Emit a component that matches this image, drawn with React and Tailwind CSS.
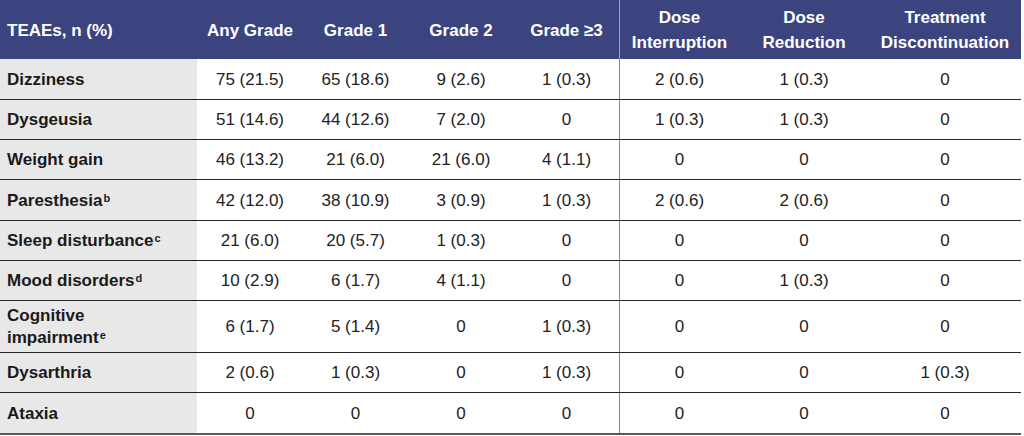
import React from 'react';

const cols = 'grid grid-cols-[197px_106px_105px_106px_105px_120px_130px_152px]';

const headers = [
    ['Any Grade'],
    ['Grade 1'],
    ['Grade 2'],
    ['Grade ≥3'],
    ['Dose', 'Interruption'],
    ['Dose', 'Reduction'],
    ['Treatment', 'Discontinuation'],
];

const rows = [
    { label: 'Dizziness', h: 'h-[41px]', cells: ['75 (21.5)', '65 (18.6)', '9 (2.6)', '1 (0.3)', '2 (0.6)', '1 (0.3)', '0'] },
    { label: 'Dysgeusia', h: 'h-[40px]', cells: ['51 (14.6)', '44 (12.6)', '7 (2.0)', '0', '1 (0.3)', '1 (0.3)', '0'] },
    { label: 'Weight gain', h: 'h-[40px]', cells: ['46 (13.2)', '21 (6.0)', '21 (6.0)', '4 (1.1)', '0', '0', '0'] },
    { label: 'Paresthesia', sup: 'b', h: 'h-[41px]', cells: ['42 (12.0)', '38 (10.9)', '3 (0.9)', '1 (0.3)', '2 (0.6)', '2 (0.6)', '0'] },
    { label: 'Sleep disturbance', sup: 'c', h: 'h-[40px]', cells: ['21 (6.0)', '20 (5.7)', '1 (0.3)', '0', '0', '0', '0'] },
    { label: 'Mood disorders', sup: 'd', h: 'h-[40px]', cells: ['10 (2.9)', '6 (1.7)', '4 (1.1)', '0', '0', '1 (0.3)', '0'] },
    { label: 'Cognitive', label2: 'impairment', sup: 'e', h: 'h-[52px]', cells: ['6 (1.7)', '5 (1.4)', '0', '1 (0.3)', '0', '0', '0'] },
    { label: 'Dysarthria', h: 'h-[40px]', cells: ['2 (0.6)', '1 (0.3)', '0', '1 (0.3)', '0', '0', '1 (0.3)'] },
    { label: 'Ataxia', h: 'h-[42px]', last: true, cells: ['0', '0', '0', '0', '0', '0', '0'] },
];

const Sup = ({ children }) => (
    <sup className="text-[11px] font-bold relative top-[-4px] ml-[1px]">{children}</sup>
);

const App = () => {
    return (
        <div className="w-[1024px] h-[436px] bg-white font-['Liberation_Sans',Arial,sans-serif] text-[17px]">
            <div className="w-[1021px]">
                {/* header */}
                <div className={`${cols} h-[59px] bg-[#3c4480] text-white font-bold`}>
                    <div className="flex items-center pl-[7px] pt-[2px]">TEAEs, n (%)</div>
                    {headers.map((h, i) => (
                        <div
                            key={i}
                            className={`flex flex-col items-center justify-center text-center leading-[25px] ${h.length === 1 ? 'pt-[2px]' : ''} ${i === 4 ? 'border-l-[1.5px] border-[#9ea3d2]' : ''}`}
                        >
                            {h.map((line) => (
                                <span key={line}>{line}</span>
                            ))}
                        </div>
                    ))}
                </div>

                {/* body */}
                {rows.map((r) => (
                    <div
                        key={r.label}
                        className={`${cols} ${r.h} ${r.last ? 'border-b-2 border-[#5a5a5a]' : 'border-b-[1.5px] border-[#262626]'}`}
                    >
                        <div className="bg-[#e8e8e8] flex flex-col justify-center pl-[7px] pt-[1px] font-bold text-[#1a1a1a] leading-[22px]">
                            {r.label2 ? (
                                <>
                                    <span>{r.label}</span>
                                    <span>
                                        {r.label2}
                                        <Sup>{r.sup}</Sup>
                                    </span>
                                </>
                            ) : (
                                <span>
                                    {r.label}
                                    {r.sup && <Sup>{r.sup}</Sup>}
                                </span>
                            )}
                        </div>
                        {r.cells.map((c, i) => (
                            <div
                                key={i}
                                className={`flex items-center justify-center pt-[1px] text-[#222] ${i === 4 ? 'border-l-[1.5px] border-[#7b7fbd]' : ''}`}
                            >
                                {c}
                            </div>
                        ))}
                    </div>
                ))}
            </div>
        </div>
    );
};

export default App;
